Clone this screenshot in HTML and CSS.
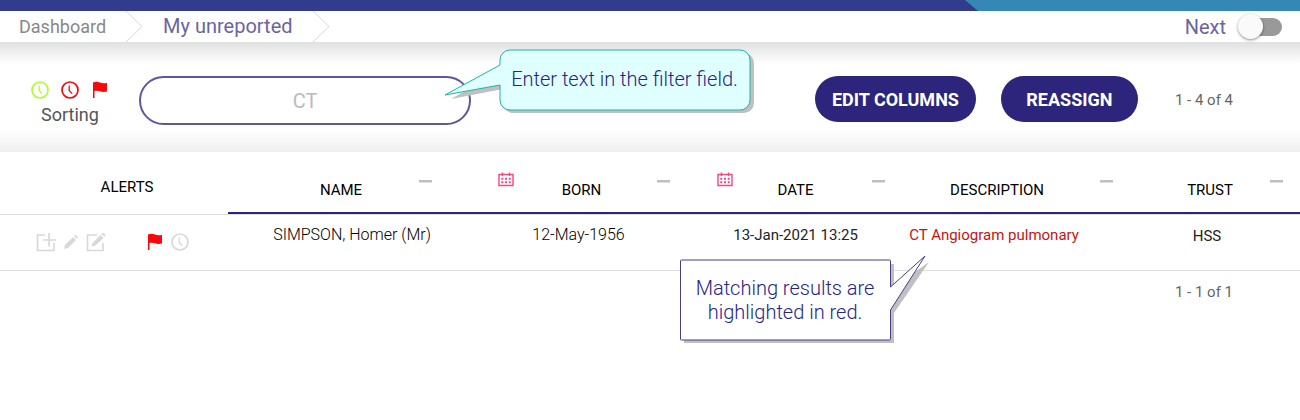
FILE: index.html
```html
<!DOCTYPE html>
<html lang="en">
<head>
<meta charset="utf-8">
<title>My unreported</title>
<link rel="stylesheet" href="styles.css">
</head>
<body>
<svg class="symbols" aria-hidden="true">
  <symbol id="clock" viewBox="0 0 18 18"><circle cx="9" cy="9" r="8" fill="none" stroke="currentColor" stroke-width="1.7"/><path d="M8.2 4.5V9.5L11.2 12.6" fill="none" stroke="currentColor" stroke-width="1.3"/></symbol>
  <symbol id="flag" viewBox="0 0 16 18"><path d="M1 1.5C4 .5 6 .8 8 1.6S12 2.3 15 2V10.5C12 11.3 10 11 8 10.3S4.500 9.500 2.500 10V17H1Z" fill="currentColor"/></symbol>
  <symbol id="calendar" viewBox="0 0 16 15"><path d="M1 2.500H15V13.500H1Z" fill="none" stroke="currentColor" stroke-width="1.400"/><path d="M4.500 .5V4M11.500 .5V4" stroke="currentColor" stroke-width="1.500"/><path d="M3.300 6.700H12.700M3.300 10.300H12.700" stroke="currentColor" stroke-width="2" stroke-dasharray="2 1.700"/></symbol>
  <symbol id="dash" viewBox="0 0 13 3"><path d="M0 0H13V2.500H0Z" fill="currentColor"/></symbol>
</svg>

<div class="topbar"></div>
<header class="crumbs">
  <nav class="trail" aria-label="Breadcrumb">
    <a class="crumb" href="#">Dashboard</a>
    <svg class="chevron" viewBox="0 0 17 31"><path d="M0 0L16 15.500L0 31" fill="none" stroke="#d8d8d8"/></svg>
    <a class="crumb crumb-current" href="#">My unreported</a>
    <svg class="chevron" viewBox="0 0 17 31"><path d="M0 0L16 15.500L0 31" fill="none" stroke="#d8d8d8"/></svg>
  </nav>
  <label class="next">Next <input class="switch" type="checkbox" role="switch"></label>
</header>

<section class="toolbar">
  <div class="sorting">
    <div class="sort-icons">
      <button class="icon-button lime" aria-label="Sort by due"><svg class="icon"><use href="#clock"/></svg></button>
      <button class="icon-button red" aria-label="Sort by overdue"><svg class="icon"><use href="#clock"/></svg></button>
      <button class="icon-button red" aria-label="Sort by flag"><svg class="icon"><use href="#flag"/></svg></button>
    </div>
    <span class="sort-label">Sorting</span>
  </div>
  <div class="filter">
    <input class="filter-input" type="text" aria-label="Filter" value="CT">
    <div class="callout callout-filter">
      <svg class="callout-shape" viewBox="0 0 312 66"><path d="M71 4H300A10 10 0 0 1 310 14V54A10 10 0 0 1 300 64H69A10 10 0 0 1 59 54V40L7 50L59 20V14Z" fill="#c0c0c0"/><path d="M67 1H296A10 10 0 0 1 306 11V51A10 10 0 0 1 296 61H66A10 10 0 0 1 56 51V36L1 46L56 16V11A10 10 0 0 1 66 1Z" fill="#e0ffff" stroke="#20b2aa"/></svg>
      <p class="callout-text">Enter text in the filter field.</p>
    </div>
  </div>
  <div class="actions">
    <button class="pill pill-wide">EDIT COLUMNS</button>
    <button class="pill">REASSIGN</button>
    <span class="count">1 - 4 of 4</span>
  </div>
</section>

<table class="worklist">
  <colgroup><col class="col-alerts"><col class="col-name"><col class="col-born"><col class="col-date"><col class="col-desc"><col></colgroup>
  <thead>
    <tr>
      <th class="head head-alerts">ALERTS</th>
      <th class="head head-sort name">NAME<svg class="dash"><use href="#dash"/></svg></th>
      <th class="head head-sort born">BORN<svg class="calendar"><use href="#calendar"/></svg><svg class="dash"><use href="#dash"/></svg></th>
      <th class="head head-sort dated">DATE<svg class="calendar"><use href="#calendar"/></svg><svg class="dash"><use href="#dash"/></svg></th>
      <th class="head head-sort desc">DESCRIPTION<svg class="dash"><use href="#dash"/></svg></th>
      <th class="head head-sort trust">TRUST<svg class="dash"><use href="#dash"/></svg></th>
    </tr>
  </thead>
  <tbody>
    <tr>
      <td class="cell cell-alerts">
        <div class="row-icons">
          <button class="icon-button" aria-label="Add"><svg class="tool" viewBox="0 0 20 20" fill="none" stroke="currentColor" stroke-width="1.600"><path d="M9 3H1.500V18.500H18V11"/><path d="M13 1V14.500M7 8H20"/></svg></button>
          <button class="icon-button" aria-label="Edit"><svg class="pencil" viewBox="0 0 14 16" fill="currentColor"><path d="M0 15L1 11L9 3L12 6L4 14ZM10 2L11.500 .5L14 3L13 5Z"/></svg></button>
          <button class="icon-button" aria-label="Edit report"><svg class="tool" viewBox="0 0 20 20" fill="currentColor"><path d="M11 3H1.500V18.500H17V11" fill="none" stroke="currentColor" stroke-width="1.600"/><path d="M5.500 14.500L6.500 11L14.500 3L17.500 6L9.500 13.500ZM15.500 2L17 .5L19.500 3L18.500 5Z"/></svg></button>
          <span class="status"><svg class="icon red"><use href="#flag"/></svg><svg class="icon"><use href="#clock"/></svg></span>
        </div>
      </td>
      <td class="cell cell-light cell-name">SIMPSON, Homer (Mr)</td>
      <td class="cell cell-light born-value">12-May-1956</td>
      <td class="cell dated">13-Jan-2021 13:25</td>
      <td class="cell cell-match">CT Angiogram pulmonary
        <div class="callout callout-match">
          <svg class="callout-shape" viewBox="0 0 252 90"><path d="M5 9H215V32L250 7L215 58V88H5Z" fill="#c0c0c0"/><path d="M2.500 5H210.500Q211.500 5 211.500 6V32L246 1L211.500 55V83Q211.500 85 210.500 85H2.500Q1.500 85 1.500 84V6Q1.500 5 2.500 5Z" fill="#fff" stroke="#483d8b"/></svg>
          <p class="callout-text">Matching results are highlighted in red.</p>
        </div>
      </td>
      <td class="cell cell-trust">HSS</td>
    </tr>
  </tbody>
</table>
<footer class="footer"><span class="count">1 - 1 of 1</span></footer>
</body>
</html>
```
FILE: styles.css
```css
* { box-sizing: border-box; }
body { min-height: 100vh; margin: 0; background: #fff; color: #222; font-family: Roboto, "Liberation Sans", sans-serif; font-size: 15px; }
button { font-family: inherit; cursor: pointer; }
.symbols { position: absolute; width: 0; height: 0; }
.topbar { background: #323c8c; }
.topbar::after { content: ""; display: block; height: 11px; margin-left: 74%; background: #3588b6; clip-path: polygon(3px 0, 100% 0, 100% 100%, 16px 100%); }

.crumbs { display: flex; align-items: center; justify-content: space-between; height: 31px; padding: 0 18px 0 19px; }
.trail { display: flex; align-items: center; gap: 20px; }
.crumb { color: #888; font-size: 18px; line-height: 31px; text-decoration: none; }
.crumb-current { color: #6c649f; font-size: 20px; }
.chevron { width: 17px; height: 31px; }
.next { display: flex; align-items: center; gap: 12px; color: #6c649f; font-size: 20px; }
.switch { position: relative; appearance: none; width: 44px; height: 18px; margin: 0; border-radius: 9px; background: linear-gradient(to right, transparent 12px, #999 12px); cursor: pointer; }
.switch::before { content: ""; position: absolute; left: 0; top: -4px; width: 25px; height: 25px; border-radius: 50%; background: #fafafa; box-shadow: 0 1px 3px rgba(0, 0, 0, .45); }

.toolbar { display: flex; align-items: flex-start; height: 110px; padding: 34px 67px 0 31px; background: linear-gradient(#dfe1e0 0, #ebebeb 8px, #fff 22px, #fff 88px, #efefef 110px); }
.sorting { width: 108px; padding-top: 5px; }
.sort-icons { display: flex; gap: 12px; }
.icon-button { display: flex; padding: 0; border: 0; background: none; color: inherit; }
.icon { width: 18px; height: 18px; }
.lime { color: #adff2f; }
.red { color: #f80808; }
.sort-label { display: block; width: 78px; color: #555; font-size: 18px; line-height: 32px; text-align: center; }
.filter { position: relative; width: 332px; }
.filter-input { display: block; width: 100%; height: 49px; border: 2px solid #6056a0; border-radius: 25px; background: #fff; color: #bbb; font-family: inherit; font-size: 20px; text-align: center; outline: 0; }
.actions { display: flex; gap: 25px; margin-left: auto; }
.pill { min-width: 137px; height: 46px; border: 0; border-radius: 23px; background: #2d247c; color: #fff; font-size: 18px; font-weight: 700; }
.pill-wide { min-width: 161px; }
.count { padding-left: 12px; color: #666; font-size: 15px; line-height: 49px; }

.callout { position: absolute; z-index: 1; color: #24248b; font-size: 20px; font-weight: 300; line-height: 24px; text-align: center; }
.callout-shape { position: absolute; inset: 0; width: 100%; height: 100%; }
.callout-text { position: relative; margin: 0; }
.callout-filter { left: 305px; top: -27px; width: 312px; height: 66px; padding: 18px 7px 0 56px; white-space: nowrap; }
.callout-match { left: -213px; top: 40px; width: 252px; height: 90px; padding: 21px 42px 0 2px; }

.worklist { width: 100%; border-collapse: separate; border-spacing: 0; table-layout: fixed; }
.col-alerts { width: 17.54%; }
.col-name { width: 17.69%; }
.col-born { width: 16.85%; }
.col-date { width: 16.54%; }
.col-desc { width: 17.54%; }
.head { position: relative; height: 63px; padding: 0; border-bottom: 1px solid #ddd; color: #000; font-weight: 400; text-align: center; }
.head-alerts { padding: 8px 0 0 26px; }
.head-sort { padding-top: 13px; box-shadow: inset 0 -2px #2d247c; }
.cell { position: relative; height: 56px; padding: 11px 0 0; border-bottom: 1px solid #ddd; text-align: center; vertical-align: top; line-height: 18px; }
.cell-light { font-size: 16px; font-weight: 300; color: #000; }
.cell-name { padding-left: 18px; }
.cell-match { padding-right: 24px; color: #cc1111; }
.cell-trust { padding-top: 12px; padding-right: 6px; }
.name { padding-right: 4px; }
.born { padding-left: 28px; }
.born-value { padding-left: 22px; }
.dated { padding-left: 22px; }
.desc { padding-right: 18px; }
.dash { position: absolute; right: 7px; top: 28px; width: 13px; height: 3px; color: #bfbfbf; }
.name .dash { right: 26px; }
.trust .dash { right: 17px; }
.calendar { position: absolute; left: 40px; top: 20px; width: 16px; height: 15px; color: #f5487f; }
.cell-alerts { padding: 17px 0 0 36px; color: #d8d8d8; }
.row-icons { display: flex; align-items: center; gap: 8px; }
.tool { width: 20px; height: 20px; }
.pencil { width: 14px; height: 16px; }
.status { display: flex; gap: 7px; margin-left: 32px; }
.footer { padding-right: 67px; text-align: right; }
.footer .count { line-height: 43px; }
```
